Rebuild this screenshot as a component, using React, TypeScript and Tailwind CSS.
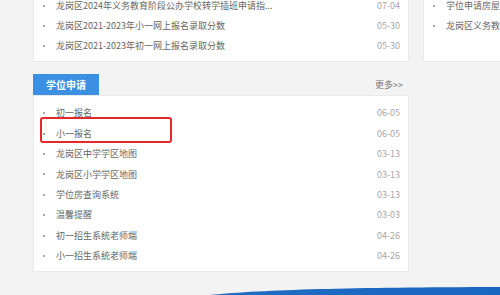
import React from "react";

const topRows = [
  { t: "龙岗区2024年义务教育阶段公办学校转学插班申请指...", d: "07-04" },
  { t: "龙岗区2021-2023年小一网上报名录取分数", d: "05-30" },
  { t: "龙岗区2021-2023年初一网上报名录取分数", d: "05-30" },
];

const rightRows = ["学位申请房屋信息登记", "龙岗区义务教育阶段"];

const rows = [
  { t: "初一报名", d: "06-05" },
  { t: "小一报名", d: "06-05" },
  { t: "龙岗区中学学区地图", d: "03-13" },
  { t: "龙岗区小学学区地图", d: "03-13" },
  { t: "学位房查询系统", d: "03-13" },
  { t: "温馨提醒", d: "03-03" },
  { t: "初一招生系统老师端", d: "04-26" },
  { t: "小一招生系统老师端", d: "04-26" },
];

function Bullet() {
  return <span className="w-[2px] h-[2px] rounded-full bg-[#8a8a8a] shrink-0" />;
}

export default function App() {
  return (
    <div
      className="w-[500px] h-[295px] overflow-hidden bg-[#f3f3f3] text-[9px]"
      style={{ fontFamily: '"Noto Sans CJK SC", "Noto Sans", sans-serif' }}
    >
      <div className="flex gap-[14px] pl-[33px] -mt-[12px]">
        <div className="w-[376px] shrink-0 flex flex-col">
          <div className="bg-white border border-[#e9e9e9] pt-[7px] pb-[5px] pl-[9px] pr-[8px]">
            {topRows.map((r, i) => (
              <div key={i} className="h-[20px] flex items-center">
                <Bullet />
                <span className="ml-[11px] text-[#666] whitespace-nowrap">{r.t}</span>
                <span className="ml-auto text-[#a8a8a8]">{r.d}</span>
              </div>
            ))}
          </div>

          <div className="mt-[12px] h-[21px] flex items-center justify-between">
            <div className="w-[66px] h-full bg-[#3d8fe1] text-white font-bold text-[10px] flex items-center justify-center">
              学位申请
            </div>
            <span className="text-[#777] pr-[6px]">更多&gt;&gt;</span>
          </div>

          <div className="relative bg-white border border-[#e9e9e9] pt-[7px] pb-[5px] pl-[9px] pr-[8px]">
            {rows.map((r, i) => (
              <div key={i} className="h-[20.4px] flex items-center">
                <Bullet />
                <span className="ml-[11px] text-[#666] whitespace-nowrap">{r.t}</span>
                <span className="ml-auto text-[#a8a8a8]">{r.d}</span>
              </div>
            ))}
            <div className="absolute left-[6px] top-[21px] w-[132px] h-[26px] border-2 border-[#e5282c] rounded-[3px]" />
          </div>
        </div>

        <div className="w-[100px] shrink-0 self-start bg-white border border-[#e9e9e9] pt-[7px] pb-[25px] pl-[9px] overflow-hidden">
          {rightRows.map((t, i) => (
            <div key={i} className="h-[20px] flex items-center whitespace-nowrap">
              <Bullet />
              <span className="ml-[11px] text-[#666]">{t}</span>
            </div>
          ))}
        </div>
      </div>

      <svg className="block mt-[13px]" width="500" height="12" viewBox="0 0 500 12">
        <defs>
          <linearGradient id="g" x1="0" x2="1" y1="0" y2="0">
            <stop offset="0" stopColor="#5b9be0" />
            <stop offset="0.12" stopColor="#1f6cc2" />
            <stop offset="1" stopColor="#1766c0" />
          </linearGradient>
        </defs>
        <path d="M190 12 C 250 5, 330 2.5, 500 2 L 500 12 Z" fill="url(#g)" />
      </svg>
    </div>
  );
}
